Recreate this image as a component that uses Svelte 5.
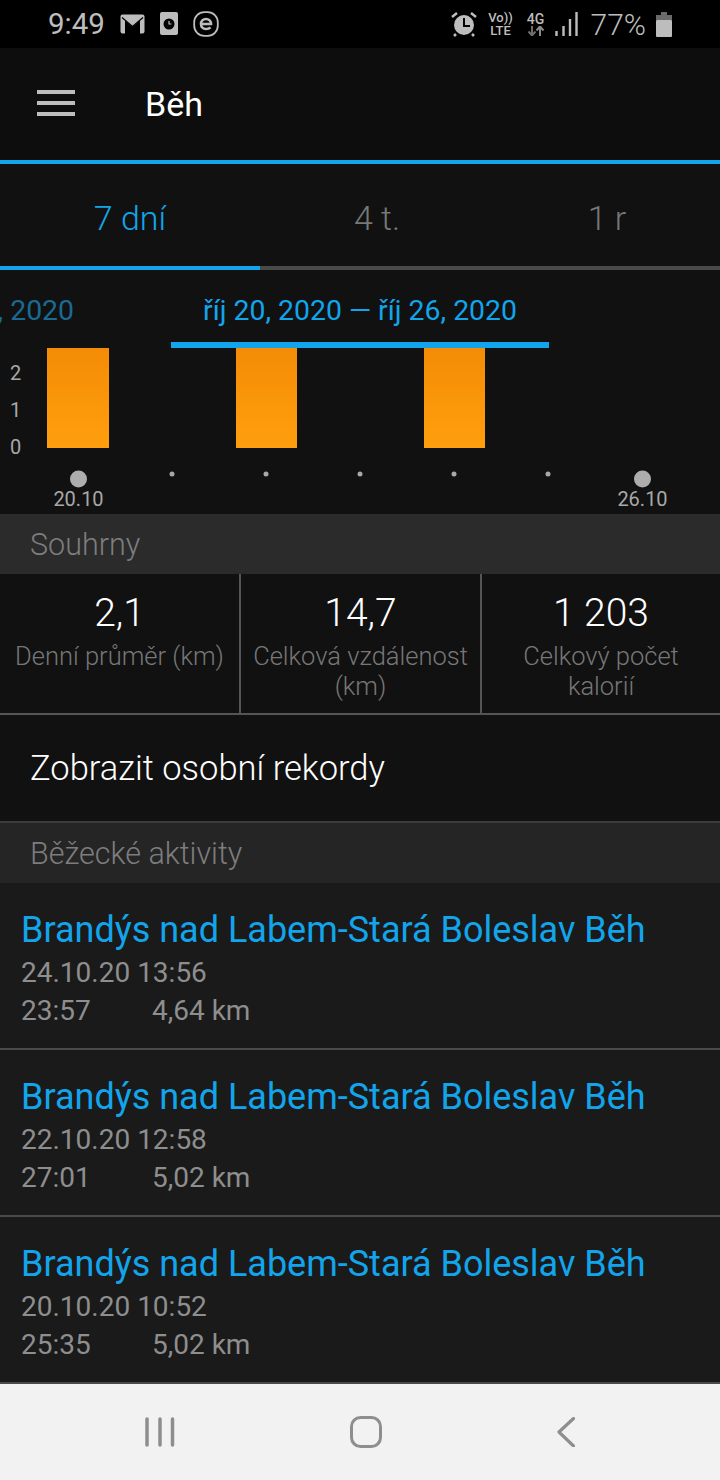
<script lang="ts">
  const stats = [
    { value: '2,1', label: 'Denní průměr (km)' },
    { value: '14,7', label: 'Celková vzdálenost (km)' },
    { value: '1 203', label: 'Celkový počet kalorií' },
  ];
  const activities = [
    { date: '24.10.20 13:56', time: '23:57', dist: '4,64 km' },
    { date: '22.10.20 12:58', time: '27:01', dist: '5,02 km' },
    { date: '20.10.20 10:52', time: '25:35', dist: '5,02 km' },
  ];
  const bars = [
    { x: 47, w: 62 },
    { x: 236, w: 61 },
    { x: 424, w: 61 },
  ];
  const dots = [172, 266, 360, 454, 548];
  const ticks = [
    { label: '2', y: 380 },
    { label: '1', y: 417 },
    { label: '0', y: 454 },
  ];
</script>

<div class="screen">
  <div class="status">
    <div class="status-left">
      <span class="clock">9:49</span>
      <svg class="ic" width="25" height="20" viewBox="0 0 25 20">
        <rect x="0.500" y="0.500" width="24" height="19" rx="2" fill="#bdbdbd" />
        <path d="M5 20V6.500l7.500 6.500L20 6.500V20" fill="#000" />
        <path d="M5 20V7l7.500 6.500L20 7v13z" fill="#000" />
        <path d="M2 3.500l10.500 9 10.500-9" fill="none" stroke="#000" stroke-width="1.200" />
      </svg>
      <svg class="ic" width="20" height="24" viewBox="0 0 20 24">
        <rect x="1" y="0" width="18" height="23" rx="2" fill="#bdbdbd" />
        <circle cx="10" cy="12" r="5.500" fill="#000" />
        <path d="M10 9v3h2.500" fill="none" stroke="#bdbdbd" stroke-width="1.200" />
      </svg>
      <svg class="ic" width="26" height="26" viewBox="0 0 26 26">
        <rect x="1.200" y="1.200" width="23.600" height="23.600" rx="10" fill="none" stroke="#bdbdbd" stroke-width="1.800" />
        <path d="M8 13h10c0-3-2-5-5-5s-5 2-5 5 2 5 5 5c2 0 3.500-.6 4.500-1.600" fill="none" stroke="#bdbdbd" stroke-width="2.600" />
      </svg>
    </div>
    <div class="status-right">
      <svg class="ic" width="26" height="26" viewBox="0 0 26 26">
        <circle cx="13" cy="14" r="10" fill="#bdbdbd" />
        <path d="M13 7v8h6" fill="none" stroke="#000" stroke-width="2" />
        <path d="M1 6l5-4M25 6l-5-4M5 23l-2 2M21 23l2 2" fill="none" stroke="#bdbdbd" stroke-width="2.500" />
      </svg>
      <div class="volte"><span>Vo))</span><span>LTE</span></div>
      <div class="net">
        <span>4G</span>
        <svg width="18" height="10" viewBox="0 0 18 10">
          <path d="M5 0v9M1.500 5.500L5 9.500l3.500-4" fill="none" stroke="#6e6e6e" stroke-width="2" />
          <path d="M13 10V1M9.500 4.500L13 .5l3.500 4" fill="none" stroke="#8a8a8a" stroke-width="2" />
        </svg>
      </div>
      <svg class="ic" width="23" height="24" viewBox="0 0 23 24">
        <path d="M1.500 19v5M8.500 14v10M15 7v17M21.500 0v24" fill="none" stroke="#bdbdbd" stroke-width="2.400" />
      </svg>
      <span class="pct">77%</span>
      <svg class="ic" width="16" height="25" viewBox="0 0 16 25">
        <path d="M5 0h6v3h5v5H0V3h5z" fill="#6a6a6a" />
        <rect x="0" y="8" width="16" height="17" rx="1" fill="#bdbdbd" />
      </svg>
    </div>
  </div>

  <header class="toolbar">
    <div class="burger"><i></i><i></i><i></i></div>
    <span class="title">Běh</span>
  </header>

  <nav class="tabs">
    <span class="tab active">7 dní</span>
    <span class="tab">4 t.</span>
    <span class="tab">1 r</span>
  </nav>

  <svg class="chart" width="720" height="244" viewBox="0 270 720 244">
    <defs>
      <linearGradient id="bar" x1="0" y1="0" x2="0" y2="1">
        <stop offset="0" stop-color="#f48c06" />
        <stop offset="1" stop-color="#ff9f0d" />
      </linearGradient>
    </defs>
    <text class="range dim" x="74" y="320" text-anchor="end">, 2020</text>
    <text class="range" x="360" y="320" text-anchor="middle">říj 20, 2020 — říj 26, 2020</text>
    <rect x="171" y="342" width="378" height="6" fill="#12a5eb" />
    {#each ticks as t}
      <text class="axis" x="15.500" y={t.y} text-anchor="middle">{t.label}</text>
    {/each}
    {#each bars as b}
      <rect x={b.x} y="348" width={b.w} height="100" fill="url(#bar)" />
    {/each}
    {#each dots as d}
      <circle cx={d} cy="474" r="2.500" fill="#a8a8a8" />
    {/each}
    <circle cx="78.500" cy="479" r="8.500" fill="#adadad" />
    <circle cx="642.500" cy="479" r="8.500" fill="#adadad" />
    <text class="axis" x="78.500" y="506" text-anchor="middle">20.10</text>
    <text class="axis" x="642.500" y="506" text-anchor="middle">26.10</text>
  </svg>

  <div class="section">Souhrny</div>

  <div class="stats">
    {#each stats as s}
      <div class="stat">
        <div class="value">{s.value}</div>
        <div class="label">{s.label}</div>
      </div>
    {/each}
  </div>

  <div class="records">Zobrazit osobní rekordy</div>

  <div class="section second">Běžecké aktivity</div>

  <div class="list">
    {#each activities as a}
      <div class="row">
        <div class="name">Brandýs nad Labem-Stará Boleslav Běh</div>
        <div class="meta">{a.date}</div>
        <div class="meta"><span class="time">{a.time}</span><span>{a.dist}</span></div>
      </div>
    {/each}
  </div>

  <div class="navbar">
    <svg width="30" height="30" viewBox="0 0 30 30">
      <path d="M2 2v26M15 2v26M27.500 2v26" fill="none" stroke="#8e8e8e" stroke-width="3.500" stroke-linecap="round" />
    </svg>
    <svg width="32" height="32" viewBox="0 0 32 32">
      <rect x="1.500" y="1.500" width="29" height="29" rx="9" fill="none" stroke="#8e8e8e" stroke-width="3" />
    </svg>
    <svg width="18" height="30" viewBox="0 0 18 30">
      <path d="M16.500 1.500L2 15l14.500 14" fill="none" stroke="#8e8e8e" stroke-width="3.200" stroke-linecap="round" stroke-linejoin="round" />
    </svg>
  </div>
</div>

<style>
  :global(body) {
    margin: 0;
    background: #1a1a1a;
  }

  .screen {
    width: 720px;
    height: 1480px;
    overflow: hidden;
    display: flex;
    flex-direction: column;
    font-family: Roboto, "Noto Sans", sans-serif;
    background: #111;
  }

  .status {
    height: 48px;
    background: #000;
    display: flex;
    align-items: center;
    justify-content: space-between;
    padding: 0 48px 0 48px;
    color: #bdbdbd;
    flex: none;
  }
  .status-left, .status-right { display: flex; align-items: center; }
  .status-left { gap: 14px; }
  .status-right { gap: 10px; }
  .ic { display: block; flex: none; }
  .clock { font-size: 29.500px; width: 58px; }
  .volte {
    display: flex;
    flex-direction: column;
    font-size: 13px;
    line-height: 13px;
    font-weight: 500;
    text-align: center;
    width: 26px;
    margin-left: 1px;
    margin-right: 3px;
  }
  .net {
    display: flex;
    flex-direction: column;
    align-items: center;
    font-size: 14px;
    line-height: 14px;
    font-weight: 500;
  }
  .pct { font-size: 30px; font-weight: 300; margin-left: 3px; }

  .toolbar {
    height: 112px;
    background: #0d0d0d;
    display: flex;
    align-items: center;
    padding: 0 37px;
    flex: none;
  }
  .burger {
    display: flex;
    flex-direction: column;
    gap: 7px;
    width: 38px;
    margin-right: 70px;
    margin-top: -3px;
  }
  .burger i { display: block; height: 4px; background: #bdbdbd; }
  .title { color: #fff; font-size: 34px; }

  .tabs {
    height: 102px;
    border-top: 4px solid #12a5eb;
    border-bottom: 4px solid #4a4a4a;
    display: grid;
    grid-template-columns: 260px 234px 226px;
    align-items: center;
    background: #111;
    position: relative;
    flex: none;
  }
  .tabs::after {
    content: "";
    position: absolute;
    left: 0;
    bottom: -4px;
    width: 260px;
    height: 4px;
    background: #12a5eb;
  }
  .tab {
    text-align: center;
    font-size: 34px;
    font-weight: 300;
    color: #777;
    padding-top: 5px;
  }
  .tab.active { color: #12a5eb; }

  .chart { display: block; flex: none; background: #111; }
  .range { font-size: 28.400px; fill: #12a5eb; font-family: Roboto, sans-serif; }
  .range.dim { fill: #1a6a94; }
  .axis { font-size: 20px; fill: #a8a8a8; font-family: Roboto, sans-serif; }

  .section {
    height: 60px;
    background: #2b2b2b;
    color: #7d7d7d;
    font-size: 30.500px;
    font-weight: 300;
    display: flex;
    align-items: center;
    padding-left: 30px;
    flex: none;
  }
  .section.second { background: #252525; border-top: 2px solid #3c3c3c; }

  .stats {
    height: 141px;
    box-sizing: border-box;
    display: grid;
    grid-template-columns: 239px 241px 240px;
    border-bottom: 2px solid #555;
    flex: none;
  }
  .stat {
    text-align: center;
    padding: 16px 8px 0;
    border-left: 2px solid #555;
  }
  .stat:first-child { border-left: none; }
  .value { color: #fff; font-size: 39px; font-weight: 300; line-height: 46px; }
  .label { color: #777; font-size: 25.500px; font-weight: 300; line-height: 30px; margin-top: 5px; }

  .records {
    height: 106px;
    display: flex;
    align-items: center;
    padding-left: 30px;
    color: #fff;
    font-size: 34.500px;
    font-weight: 300;
    flex: none;
  }

  .list { background: #1a1a1a; flex: 1; }
  .row {
    height: 167px;
    box-sizing: border-box;
    border-bottom: 2px solid #4a4a4a;
    padding: 26px 21px 0;
  }
  .name { color: #12a5eb; font-size: 36px; line-height: 42px; white-space: nowrap; }
  .meta { color: #8e8e8e; font-size: 28px; line-height: 38px; }
  .name + .meta { margin-top: 3px; }
  .time { display: inline-block; width: 131px; }

  .navbar {
    height: 96px;
    background: #f2f2f2;
    display: flex;
    align-items: center;
    flex: none;
    justify-content: space-between;
    padding: 0 145px 0 145px;
  }
</style>
